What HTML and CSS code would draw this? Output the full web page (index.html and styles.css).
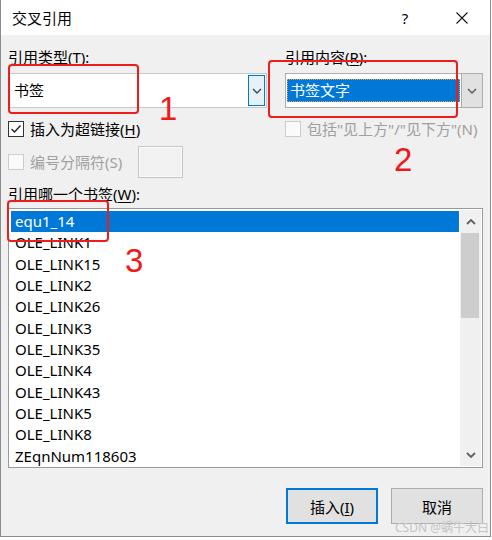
FILE: index.html
```html
<!DOCTYPE html>
<html lang="zh-CN">
<head>
    <meta charset="UTF-8">
    <meta name="viewport" content="width=device-width, initial-scale=1.0">
    <title>交叉引用</title>
    <link rel="stylesheet" href="styles.css">
</head>
<body>
    <div class="dialog">
        <div class="titlebar">
            <span class="title">交叉引用</span>
            <span class="tb-btn help">?</span>
            <span class="tb-btn close">
                <svg width="12" height="12" viewBox="0 0 12 12"><path d="M0.5 0.5L11.5 11.5M11.5 0.5L0.5 11.5" stroke="#111" stroke-width="1.1" fill="none"/></svg>
            </span>
        </div>

        <div class="content">
            <div class="top">
                <div class="col">
                    <div class="label">引用类型(<u>T</u>):</div>
                    <div class="combo">
                        <div class="combo-text">书签</div>
                        <div class="combo-btn hot">
                            <svg width="10" height="6" viewBox="0 0 10 6"><path d="M1 1L5 5L9 1" stroke="#444" stroke-width="1.3" fill="none"/></svg>
                        </div>
                    </div>
                    <div class="check">
                        <span class="box">
                            <svg width="14" height="14" viewBox="0 0 14 14"><path d="M2.5 7L5.5 10L11.5 3.5" stroke="#222" stroke-width="1.4" fill="none"/></svg>
                        </span>
                        <span>插入为超链接(<u>H</u>)</span>
                    </div>
                    <div class="sep-row">
                        <div class="check disabled sep-label">
                            <span class="box"></span>
                            <span>编号分隔符(S)</span>
                        </div>
                        <div class="sep-input"></div>
                    </div>
                </div>

                <div class="col">
                    <div class="label">引用内容(<u>R</u>):</div>
                    <div class="combo droplist">
                        <div class="combo-text"><span class="selected">书签文字</span></div>
                        <div class="combo-btn">
                            <svg width="10" height="6" viewBox="0 0 10 6"><path d="M1 1L5 5L9 1" stroke="#555" stroke-width="1.3" fill="none"/></svg>
                        </div>
                    </div>
                    <div class="check disabled">
                        <span class="box"></span>
                        <span>包括"见上方"/"见下方"(N)</span>
                    </div>
                </div>
            </div>

            <div class="label list-label">引用哪一个书签(<u>W</u>):</div>
            <div class="listbox">
                <ul class="items">
                    <li class="active">equ1_14</li>
                    <li>OLE_LINK1</li>
                    <li>OLE_LINK15</li>
                    <li>OLE_LINK2</li>
                    <li>OLE_LINK26</li>
                    <li>OLE_LINK3</li>
                    <li>OLE_LINK35</li>
                    <li>OLE_LINK4</li>
                    <li>OLE_LINK43</li>
                    <li>OLE_LINK5</li>
                    <li>OLE_LINK8</li>
                    <li>ZEqnNum118603</li>
                </ul>
                <div class="scrollbar">
                    <div class="arrow">
                        <svg width="10" height="6" viewBox="0 0 10 6"><path d="M1 5L5 1L9 5" stroke="#606060" stroke-width="1.8" fill="none"/></svg>
                    </div>
                    <div class="track"><div class="thumb"></div></div>
                    <div class="arrow">
                        <svg width="10" height="6" viewBox="0 0 10 6"><path d="M1 1L5 5L9 1" stroke="#606060" stroke-width="1.8" fill="none"/></svg>
                    </div>
                </div>
            </div>

            <div class="buttons">
                <button class="btn default">插入(<u>I</u>)</button>
                <button class="btn">取消</button>
            </div>
        </div>

        <!-- red annotations drawn over the dialog -->
        <div class="mark mark-1"></div>
        <div class="mark mark-2"></div>
        <div class="mark mark-3"></div>
        <span class="num num-1">1</span>
        <span class="num num-2">2</span>
        <span class="num num-3">3</span>

        <span class="watermark">CSDN @蜗牛大白</span>
    </div>
</body>
</html>
```

FILE: styles.css
```css
body {
    margin: 0;
    background: #ffffff;
    font-family: "Noto Sans", "Noto Sans CJK SC", sans-serif;
    font-size: 15px;
    color: #000;
}
u {
    text-decoration: underline;
    text-underline-offset: 2px;
}
.dialog {
    position: relative;
    width: 489px;
    height: 536px;
    background: #f0f0f0;
    border: 1px solid #8c8c8c;
    border-top: none;
    display: flex;
    flex-direction: column;
}
.titlebar {
    height: 35px;
    background: #ffffff;
    display: flex;
    align-items: center;
}
.title {
    padding-left: 11px;
    font-size: 15px;
}
.tb-btn {
    width: 46px;
    height: 35px;
    display: flex;
    align-items: center;
    justify-content: center;
}
.help {
    margin-left: auto;
    font-size: 15px;
}
.close {
    margin-left: 11px;
    margin-right: 5px;
}
.content {
    padding: 12px 7px 0 7px;
    display: flex;
    flex-direction: column;
}
.top {
    display: grid;
    grid-template-columns: 259px 1fr;
    column-gap: 18px;
}
.label {
    height: 20px;
    line-height: 20px;
}
.combo {
    margin-top: 6px;
    height: 35px;
    box-sizing: border-box;
    border: 1px solid #c8c8c8;
    background: #fff;
    display: flex;
    padding: 1px;
}
.combo-text {
    flex: 1;
    padding-left: 4px;
    line-height: 31px;
}
.combo-btn {
    width: 17px;
    box-sizing: border-box;
    display: flex;
    align-items: center;
    justify-content: center;
}
.combo-btn.hot {
    background: #e5f1fb;
    border: 1px solid #0078d7;
}
.droplist {
    border-color: #adadad;
    padding: 0;
}
.droplist .combo-text {
    padding: 5px 1px 5px 1px;
    display: flex;
    line-height: 23px;
}
.droplist .selected {
    flex: 1;
    background: #0078d7;
    color: #fff;
    padding-left: 3px;
    outline: 1px dotted #e8a04a;
    outline-offset: -1px;
}
.droplist .combo-btn {
    width: 21px;
    background: #e1e1e1;
    border-left: 1px solid #adadad;
}
.check {
    margin-top: 12px;
    height: 18px;
    display: flex;
    align-items: center;
    gap: 6px;
    line-height: 18px;
}
.box {
    width: 16px;
    height: 16px;
    box-sizing: border-box;
    border: 1px solid #333;
    background: #fff;
    display: flex;
    align-items: center;
    justify-content: center;
    flex-shrink: 0;
}
.check.disabled {
    color: #a0a0a0;
}
.check.disabled .box {
    border-color: #cccccc;
    background: #fafafa;
}
.sep-row {
    margin-top: 8px;
    height: 32px;
    display: flex;
    align-items: center;
}
.sep-label {
    margin-top: 0;
    width: 130px;
}
.sep-input {
    width: 45px;
    height: 32px;
    box-sizing: border-box;
    border: 1px solid #c6c6c6;
    background: #f2f2f2;
    box-shadow: inset 0 0 0 1px #fbfbfb;
}
.list-label {
    margin-top: 6px;
}
.listbox {
    margin-top: 4px;
    height: 260px;
    box-sizing: border-box;
    border: 1px solid #9a9a9a;
    background: #fff;
    display: flex;
    padding: 1px 1px 1px 1px;
}
.items {
    list-style: none;
    margin: 0;
    padding: 1px 0 0 1px;
    flex: 1;
}
.items li {
    height: 21.35px;
    line-height: 21px;
    padding-left: 4px;
}
.items li.active {
    background: #0078d7;
    color: #fff;
}
.scrollbar {
    width: 21px;
    margin-left: 1px;
    background: #f0f0f0;
    display: flex;
    flex-direction: column;
}
.arrow {
    height: 23px;
    display: flex;
    align-items: center;
    justify-content: center;
}
.track {
    flex: 1;
    padding: 0 2px 0 1px;
}
.thumb {
    height: 85px;
    background: #cdcdcd;
}
.buttons {
    margin-top: 20px;
    display: flex;
    justify-content: flex-end;
    gap: 13px;
}
.btn {
    width: 92px;
    height: 36px;
    box-sizing: border-box;
    background: #e1e1e1;
    border: 1px solid #adadad;
    font-family: "Noto Sans", "Noto Sans CJK SC", sans-serif;
    font-size: 15px;
    color: #000;
    padding: 0;
}
.btn.default {
    border: 2px solid #0078d7;
}
.mark {
    position: absolute;
    border: 2px solid #ee1c1c;
    border-radius: 4px;
}
.mark-1 {
    left: 7px;
    top: 64px;
    width: 127px;
    height: 46px;
}
.mark-2 {
    left: 267px;
    top: 60px;
    width: 186px;
    height: 54px;
}
.mark-3 {
    left: 6px;
    top: 200px;
    width: 98px;
    height: 38px;
}
.num {
    position: absolute;
    font-family: "Liberation Sans", sans-serif;
    font-size: 33px;
    line-height: 33px;
    color: #f01818;
}
.num-1 {
    left: 158px;
    top: 92px;
}
.num-2 {
    left: 393px;
    top: 143px;
}
.num-3 {
    left: 124px;
    top: 244px;
}
.watermark {
    position: absolute;
    right: 1px;
    bottom: 1px;
    font-size: 12px;
    line-height: 14px;
    color: #c4c4c4;
}
```
